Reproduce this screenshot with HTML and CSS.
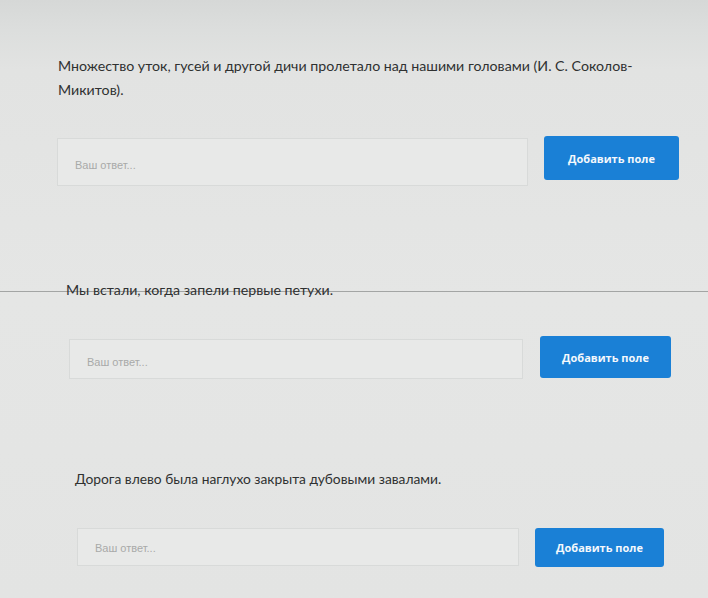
FILE: index.html
```html
<!DOCTYPE html>
<html lang="ru">
<head>
<meta charset="utf-8">
<title>Задания</title>
<link rel="stylesheet" href="styles.css">
</head>
<body>
<main class="page">
  <section class="task task-1">
    <p class="task-text">Множество уток, гусей и другой дичи пролетало над нашими головами (И. С. Соколов-Микитов).</p>
    <div class="answer-row">
      <div class="answer-input">Ваш ответ...</div>
      <button class="add-btn">Добавить поле</button>
    </div>
  </section>
  <section class="task task-2">
    <p class="task-text task-text-ruled">Мы встали, когда запели первые петухи.</p>
    <div class="answer-row">
      <div class="answer-input">Ваш ответ...</div>
      <button class="add-btn">Добавить поле</button>
    </div>
  </section>
  <section class="task task-3">
    <p class="task-text">Дорога влево была наглухо закрыта дубовыми завалами.</p>
    <div class="answer-row">
      <div class="answer-input">Ваш ответ...</div>
      <button class="add-btn">Добавить поле</button>
    </div>
  </section>
</main>
</body>
</html>
```

FILE: styles.css
```css
html, body {
  margin: 0;
  padding: 0;
}
body {
  width: 708px;
  height: 598px;
  overflow: hidden;
  background: linear-gradient(to bottom, #d6d8d7 0px, #dcdedd 30px, #e2e3e2 70px, #e5e6e5 300px, #e3e4e3 598px);
  font-family: Lato, "Open Sans", "Liberation Sans", sans-serif;
  color: #333;
}
.page {
  display: flex;
  flex-direction: column;
}
.task-text {
  margin: 0;
  font-size: 14.2px;
  line-height: 24px;
  color: #2f3131;
}
.answer-row {
  display: flex;
  align-items: flex-start;
  margin-top: 37px;
}
.answer-input {
  box-sizing: border-box;
  flex: 1;
  height: 42px;
  display: flex;
  align-items: center;
  padding: 6px 0 0 17px;
  border: 1px solid #d8dad9;
  background: #e8e9e8;
  font-family: "Liberation Sans", sans-serif;
  font-size: 11px;
  color: #a8aaa9;
}
.add-btn {
  box-sizing: border-box;
  height: 43px;
  border: none;
  border-radius: 3px;
  background: #1a80d6;
  color: #f4f8fc;
  font-family: "Open Sans", "Liberation Sans", sans-serif;
  font-weight: 700;
  font-size: 11px;
  padding: 0;
}
.task-1 {
  padding: 54px 29px 0 58px;
}
.task-1 .answer-row { gap: 16px; margin-top: 34px; }
.task-1 .answer-input { margin: 2px 0 0 -1px; height: 48px; }
.task-1 .add-btn { width: 135px; height: 44px; }

.task-2 {
  margin-top: 92px;
}
.task-text-ruled {
  padding-left: 66px;
  background: linear-gradient(to bottom, transparent 13px, #a3a5a4 13px, #a3a5a4 14px, transparent 14px);
}
.task-2 .answer-row { gap: 17px; margin-top: 34px; padding: 0 37px 0 69px; }
.task-2 .answer-input { height: 40px; margin-top: 3px; }
.task-2 .add-btn { width: 131px; height: 42px; }

.task-3 {
  margin-top: 88px;
  padding: 0 44px 0 75px;
}
.task-3 .task-text { font-size: 13.8px; }
.task-3 .answer-row { gap: 16px; padding-left: 2px; }
.task-3 .answer-input { height: 38px; padding-top: 1px; }
.task-3 .add-btn { width: 129px; height: 39px; }
```
